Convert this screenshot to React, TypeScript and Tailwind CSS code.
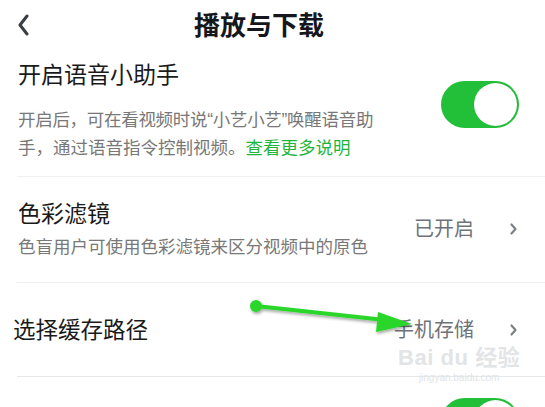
import React from 'react';

const font = { fontFamily: '"Noto Sans", "Noto Sans CJK SC", sans-serif' };
const latin = { fontFamily: '"Liberation Sans", sans-serif' };

function Toggle() {
    return (
        <div className="w-[78px] h-[47px] rounded-full bg-[#22bf38] flex items-center justify-end pr-[2px] shrink-0">
            <div className="w-[43px] h-[43px] rounded-full bg-white shadow-[0_0_1px_rgba(0,0,0,0.2)]" />
        </div>
    );
}

function Chevron() {
    return (
        <svg width="9" height="14" viewBox="0 0 9 14" className="shrink-0">
            <path d="M2.5 2.5 L6.5 7 L2.5 11.5" fill="none" stroke="#7d8086" strokeWidth="2.2" strokeLinecap="round" strokeLinejoin="round" />
        </svg>
    );
}

export default function App() {
    return (
        <div className="relative w-[545px] h-[407px] overflow-hidden bg-white" style={font}>
            {/* header */}
            <div className="h-[50px] flex items-center pl-[17px]">
                <svg width="13" height="22" viewBox="0 0 13 22" className="shrink-0">
                    <path d="M10 2 L3 11 L10 20" fill="none" stroke="#3a3d44" strokeWidth="3" strokeLinecap="round" strokeLinejoin="round" />
                </svg>
                <h1 className="ml-[164px] text-[26px] font-bold text-[#15171c] leading-none">播放与下载</h1>
            </div>

            {/* voice assistant */}
            <div className="flex items-center pl-[18px] pr-[26px] pt-[9px] pb-[15px]">
                <div className="flex-1">
                    <div className="text-[23px] leading-[30px] text-[#1a1a1a]">开启语音小助手</div>
                    <p className="mt-[17px] text-[17.5px] leading-[27px] text-[#787878]">
                        <span className="tracking-[-0.3px]">
                            开启后，可在看视频时说<span style={latin}>“</span>小艺小艺<span style={latin}>”</span>唤醒语音助
                        </span>
                        <br />
                        手，通过语音指令控制视频。<span className="text-[#1fb53c]">查看更多说明</span>
                    </p>
                </div>
                <div className="mt-[-12px]">
                    <Toggle />
                </div>
            </div>
            <div className="ml-[17px] h-px bg-[#eef0f2]" />

            {/* color filter */}
            <div className="flex items-center pl-[18px] pr-[27px] pt-[21px] pb-[22px]">
                <div className="flex-1">
                    <div className="text-[23px] leading-[30px] text-[#1a1a1a]">色彩滤镜</div>
                    <div className="mt-[5px] text-[17.5px] leading-[27px] text-[#787878]">色盲用户可使用色彩滤镜来区分视频中的原色</div>
                </div>
                <span className="text-[20px] text-[#6f7278] mr-[35px]">已开启</span>
                <Chevron />
            </div>
            <div className="ml-[17px] h-px bg-[#eef0f2]" />

            {/* cache path */}
            <div className="h-[93px] flex items-center pl-[13px] pr-[27px]">
                <div className="flex-1 text-[22.5px] text-[#1a1a1a]">选择缓存路径</div>
                <span className="text-[20px] text-[#6f7278] mr-[35px]">手机存储</span>
                <Chevron />
            </div>
            <div className="ml-[17px] h-px bg-[#e6e8ea]" />

            <div className="flex justify-end pr-[26px] pt-[21px]">
                <Toggle />
            </div>

            {/* watermark */}
            <div className="absolute left-[398px] top-[345px] flex flex-col items-center text-[#e2e4e6] pointer-events-none">
                <span className="text-[22px] font-bold leading-[26px] tracking-wide" style={{ fontFamily: '"Liberation Sans", "Noto Sans CJK SC", sans-serif' }}>Bai du 经验</span>
                <span className="text-[10px] leading-[13px]" style={latin}>jingyan.baidu.com</span>
            </div>

            {/* annotation arrow */}
            <svg className="absolute left-0 top-0 pointer-events-none" width="545" height="407">
                <defs>
                    <filter id="sh" x="-10%" y="-50%" width="120%" height="200%">
                        <feDropShadow dx="1" dy="2" stdDeviation="1.5" floodColor="#000" floodOpacity="0.35" />
                    </filter>
                </defs>
                <g filter="url(#sh)">
                    <circle cx="256" cy="306" r="6" fill="#2bd62b" />
                    <line x1="256" y1="306" x2="385" y2="320" stroke="#2bd62b" strokeWidth="4" />
                    <polygon points="412,324 378,312 376,332" fill="#2bd62b" />
                </g>
            </svg>
        </div>
    );
}
